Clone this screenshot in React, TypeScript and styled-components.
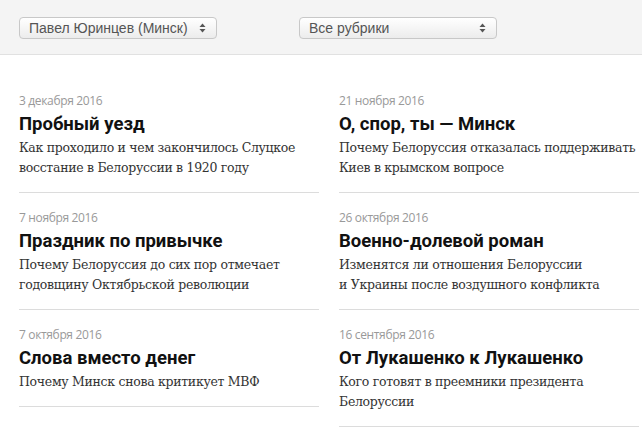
import React from "react";
import styled, { createGlobalStyle } from "styled-components";

const Global = createGlobalStyle`
  html, body { margin: 0; padding: 0; background: #fff; }
  body { width: 642px; height: 428px; overflow: hidden; }
`;

const Page = styled.div`
  width: 642px;
  overflow: hidden;
`;

const Toolbar = styled.div`
  box-sizing: border-box;
  height: 55px;
  background: #f4f4f4;
  border-bottom: 1px solid #e1e1e1;
  display: flex;
  align-items: flex-start;
  gap: 82px;
  padding: 17px 0 0 19px;
`;

const SelectBox = styled.div<{ $w: number }>`
  width: ${(p) => p.$w}px;
  height: 22px;
  box-sizing: border-box;
  border: 1px solid #c8c8c8;
  border-radius: 4px;
  background: linear-gradient(#ffffff, #ececec);
  display: flex;
  align-items: center;
  justify-content: space-between;
  padding: 0 10px 0 9px;
  font-family: "Liberation Sans", Arial, sans-serif;
  font-size: 14px;
  color: #555;
`;

const Arrows = styled.svg`
  width: 7px;
  height: 10px;
  flex: none;
`;

const Columns = styled.div`
  display: grid;
  grid-template-columns: 300px 300px;
  column-gap: 20px;
  padding: 21px 0 0 19px;
  width: 700px;
`;

const Column = styled.div`
  display: flex;
  flex-direction: column;
  min-width: 0;
`;

const Item = styled.article`
  padding: 17px 0 14px;
  border-bottom: 1px solid #dcdcdc;
  display: flex;
  flex-direction: column;
`;

const DateLine = styled.div`
  font-family: "Open Sans", "Noto Sans", sans-serif;
  font-size: 12px;
  line-height: 16px;
  letter-spacing: -0.35px;
  color: #999;
  margin-bottom: 3px;
`;

const Title = styled.h2`
  margin: 0 0 2px;
  font-family: Roboto, "Liberation Sans", sans-serif;
  font-weight: 700;
  font-size: 18.5px;
  line-height: 24px;
  color: #111;
  white-space: nowrap;
`;

const Desc = styled.p`
  margin: 0;
  font-family: "DejaVu Serif", "Liberation Serif", serif;
  font-size: 12.5px;
  letter-spacing: -0.3px;
  line-height: 20px;
  color: #333;
  white-space: pre;
`;

const Arrow = () => (
  <Arrows viewBox="0 0 7 10">
    <path d="M3.5 0.5 L6.5 4 L0.5 4 Z" fill="#555" />
    <path d="M3.5 9.5 L6.5 6 L0.5 6 Z" fill="#555" />
  </Arrows>
);

type Post = { date: string; title: string; desc: string };

const left: Post[] = [
  { date: "3 декабря 2016", title: "Пробный уезд", desc: "Как проходило и чем закончилось Слуцкое\nвосстание в Белоруссии в 1920 году" },
  { date: "7 ноября 2016", title: "Праздник по привычке", desc: "Почему Белоруссия до сих пор отмечает\nгодовщину Октябрьской революции" },
  { date: "7 октября 2016", title: "Слова вместо денег", desc: "Почему Минск снова критикует МВФ" },
];

const right: Post[] = [
  { date: "21 ноября 2016", title: "О, спор, ты — Минск", desc: "Почему Белоруссия отказалась поддерживать\nКиев в крымском вопросе" },
  { date: "26 октября 2016", title: "Военно-долевой роман", desc: "Изменятся ли отношения Белоруссии\nи Украины после воздушного конфликта" },
  { date: "16 сентября 2016", title: "От Лукашенко к Лукашенко", desc: "Кого готовят в преемники президента\nБелоруссии" },
];

const List = ({ posts }: { posts: Post[] }) => (
  <Column>
    {posts.map((p) => (
      <Item key={p.title}>
        <DateLine>{p.date}</DateLine>
        <Title>{p.title}</Title>
        <Desc>{p.desc}</Desc>
      </Item>
    ))}
  </Column>
);

export default function App() {
  return (
    <Page>
      <Global />
      <Toolbar>
        <SelectBox $w={198}>
          <span>Павел Юринцев (Минск)</span>
          <Arrow />
        </SelectBox>
        <SelectBox $w={198}>
          <span>Все рубрики</span>
          <Arrow />
        </SelectBox>
      </Toolbar>
      <Columns>
        <List posts={left} />
        <List posts={right} />
      </Columns>
    </Page>
  );
}
